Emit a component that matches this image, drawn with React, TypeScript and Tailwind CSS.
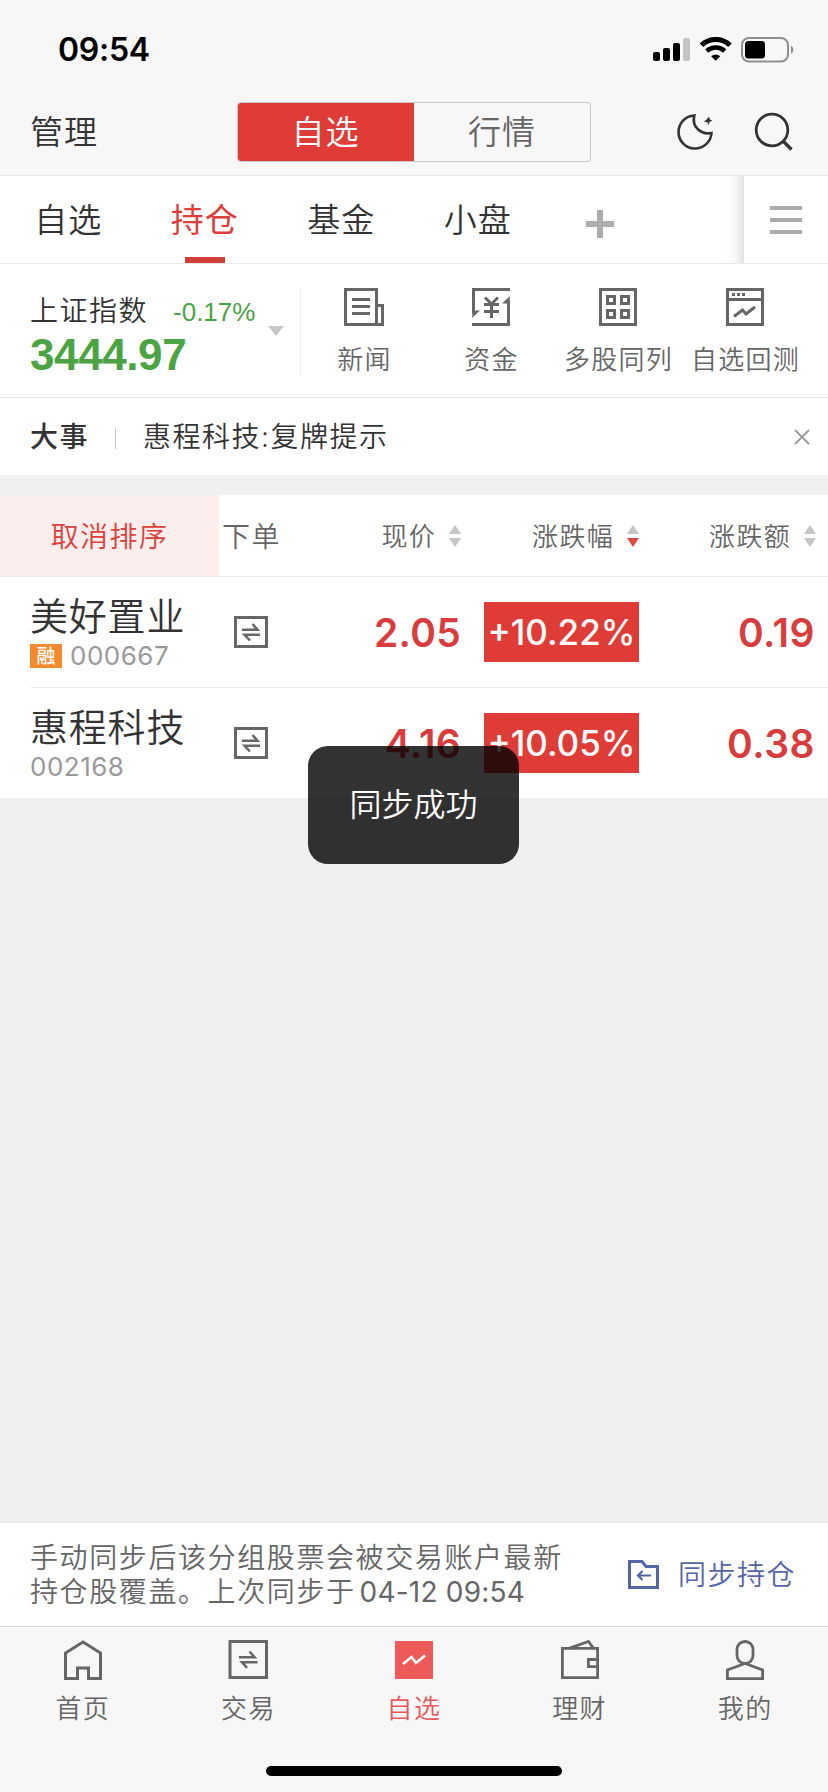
import type { ReactNode } from 'react';

function StatusBar() {
  return (
    <div className="flex h-[100px] items-center justify-between pl-[58px] pr-[33px]">
      <div className="text-[32px] font-semibold leading-none tracking-[-0.300px] text-black">09:54</div>
      <svg width="142" height="26" viewBox="0 0 142 26" fill="none">
        <g transform="translate(0 1)">
          <rect x="0" y="14" width="7" height="9" rx="2" fill="#000" />
          <rect x="10" y="10" width="7" height="13" rx="2" fill="#000" />
          <rect x="20" y="5" width="7" height="18" rx="2" fill="#000" />
          <rect x="30" y="0" width="7" height="23" rx="2" fill="#c4c4c4" />
        </g>
        <path d="M48.5 8.2a20.5 20.5 0 0 1 28.5 0" stroke="#000" strokeWidth="5" />
        <path d="M53.8 14.1a13 13 0 0 1 17.9 0" stroke="#000" strokeWidth="4.6" />
        <path d="M62.7 23.8l-4.6-4.6a6.8 6.8 0 0 1 9.2 0z" fill="#000" />
        <rect x="89" y="1" width="46" height="23.5" rx="7" stroke="#8f8f8f" strokeWidth="2" />
        <rect x="92" y="4" width="20" height="17.500" rx="3.500" fill="#000" />
        <path d="M138 8.800c3 1 3 7 0 8z" fill="#8f8f8f" />
      </svg>
    </div>
  );
}

function NavBar() {
  return (
    <div className="flex h-[76px] items-start border-b border-[#e6e6e6] text-[33px] leading-none tracking-[1px]">
      <div className="flex h-[64px] w-[237px] items-center pl-[30px] text-[#333]">管理</div>
      <div className="mt-[2px] flex h-[60px] w-[354px] overflow-hidden rounded-[4px] border border-[#c8c8c8]">
        <div className="-my-px -ml-px flex w-[177px] items-center justify-center bg-[#df3c37] text-white">自选</div>
        <div className="flex flex-1 items-center justify-center text-[#666]">行情</div>
      </div>
      <div className="flex h-[64px] flex-1 items-center pl-[84px]">
        <svg width="40" height="40" viewBox="0 0 40 40" fill="none" stroke="#333" strokeWidth="2.600">
          <path d="M19.300 3.500A16.500 16.500 0 1 0 36.500 21C26 23 16.500 15 19.300 3.500Z" strokeLinejoin="miter" />
          <path d="M34 4.500l.9 3 2.700 1.200-2.900 1.100-1.100 3.200-1.300-2.800-3.400-.6 2.700-2z" fill="#333" stroke="none" />
        </svg>
        <svg className="ml-[38px]" width="40" height="40" viewBox="0 0 40 40" fill="none" stroke="#333" strokeWidth="2.800">
          <circle cx="19" cy="18" r="15.800" />
          <path d="M30 29l8.500 8.500" strokeWidth="3.200" />
        </svg>
      </div>
    </div>
  );
}

function Tabs() {
  const tabs = ['自选', '持仓', '基金', '小盘'];
  return (
    <div className="flex h-[88px] border-b border-[#e8e8e8] bg-white text-[33px] leading-none tracking-[1px] text-[#333]">
      <div className="flex flex-1 overflow-hidden">
        {tabs.map((tab, i) => (
          <div key={tab} className="flex w-[136.500px] flex-col items-center">
            <div className={i === 1 ? 'flex h-[81px] items-center pt-[7px] font-normal text-[#dc3e3a]' : 'flex h-[81px] items-center pt-[7px]'}>
              {tab}
            </div>
            {i === 1 && <div className="h-[6px] w-[40px] bg-[#d13f39]" />}
          </div>
        ))}
        <div className="flex w-[108px] items-center justify-center pt-[9px]">
          <svg width="28" height="28" viewBox="0 0 28 28">
            <path d="M14 0v28M0 14h28" stroke="#ababab" strokeWidth="6" />
          </svg>
        </div>
        <div className="ml-auto w-[18px] bg-linear-to-r from-white via-[#f8f8f8] to-[#e2e2e2]" />
      </div>
      <div className="flex w-[84px] items-center pl-[26px]">
        <svg width="32" height="28" viewBox="0 0 32 28">
          <path d="M0 2h32M0 14h32M0 26h32" stroke="#aaa" strokeWidth="4" />
        </svg>
      </div>
    </div>
  );
}

const newsIcon = (
  <>
    <path d="M.5 1.500h31v35H.5z" />
    <path d="M32 17.500h5.500v19H31" />
    <path d="M7 11.500h18M7 18.500h18M7 25.500h18" />
  </>
);
const fundsIcon = (
  <>
    <path d="M38 1.500H1.500V26" />
    <path d="M0 36.500h36.500V12" />
    <path d="M0 30l8-7.500H1zM38 8l-8 7.500h7z" fill="#666" stroke="none" />
    <path d="M13 9.500l6.500 6.500L26 9.500M12 16.500h15M12 23.500h15M19.500 16v14" />
  </>
);
const gridIcon = (
  <>
    <path d="M1.500 1.500h35v35h-35z" />
    <path d="M8.500 8.500h7v7h-7zM22.500 8.500h7v7h-7zM8.500 22.500h7v7h-7zM22.500 22.500h7v7h-7z" />
  </>
);
const backtestIcon = (
  <>
    <path d="M1.500 1.500h35v35h-35zM1.500 11.500h35" />
    <path d="M6 6.500h13" strokeDasharray="3 2" />
    <path d="M8 28.500l8.500-6.500 3.500 4 9-7" />
  </>
);

function Shortcut({ label, children }: { label: string; children: ReactNode }) {
  return (
    <div className="flex w-[127px] flex-col items-center gap-[20px] pt-[24px]">
      <svg className="overflow-visible" width="38" height="38" viewBox="0 0 38 38" fill="none" stroke="#666" strokeWidth="3">
        {children}
      </svg>
      <div className="whitespace-nowrap pl-[2px] text-[26px] leading-[28px] tracking-[1.300px] text-[#666]">{label}</div>
    </div>
  );
}

function IndexBar() {
  return (
    <div className="flex h-[134px] border-b border-[#e6e6e6] bg-white">
      <div className="flex w-[268px] flex-col pl-[30px] pt-[32px]">
        <div className="flex items-center text-[28px] leading-none tracking-[1.500px] text-[#333]">
          上证指数
          <span className="ml-[25px] pt-[3px] font-['Liberation_Sans',sans-serif] text-[26px] leading-none tracking-normal text-[#4ca343]">-0.17%</span>
        </div>
        <div className="mt-[8px] font-['Liberation_Sans',sans-serif] text-[44px] font-bold leading-[44px] tracking-[-0.400px] text-[#4ca343]">3444.97</div>
      </div>
      <svg className="mt-[62px]" width="16" height="10" viewBox="0 0 16 10">
        <path d="M0 0h16L8 10z" fill="#c8c8c8" />
      </svg>
      <div className="mt-[24px] h-[88px] w-px translate-x-[16px] bg-[#ececec]" />
      <div className="ml-[15px] flex">
        <Shortcut label="新闻">{newsIcon}</Shortcut>
        <Shortcut label="资金">{fundsIcon}</Shortcut>
        <Shortcut label="多股同列">{gridIcon}</Shortcut>
        <Shortcut label="自选回测">{backtestIcon}</Shortcut>
      </div>
    </div>
  );
}

function NewsBar() {
  return (
    <div className="flex h-[77px] items-center bg-white pl-[30px] pr-[18px] text-[28px] leading-none tracking-[1.500px] text-[#333]">
      <div className="font-medium">大事</div>
      <div className="ml-[26px] mt-[4px] h-[21px] w-px bg-[#ccc]" />
      <div className="ml-[27px]">惠程科技:复牌提示</div>
      <svg className="ml-auto" width="16" height="16" viewBox="0 0 16 16">
        <path d="M1 1l14 14M15 1L1 15" stroke="#999" strokeWidth="1.800" />
      </svg>
    </div>
  );
}

function SortHead({ label, active }: { label: string; active?: boolean }) {
  return (
    <div className="flex items-center justify-end text-[26px] tracking-[1.300px]">
      <span className="pt-[2px]">{label}</span>
      <svg className="ml-[13px]" width="12" height="22" viewBox="0 0 12 22">
        <path d="M6 0l6 9H0z" fill="#c4c4c4" />
        <path d="M6 22l6-9H0z" fill={active ? '#e04a46' : '#c4c4c4'} />
      </svg>
    </div>
  );
}

function SwapGlyph({ size }: { size: 'row' | 'tab' }) {
  return size === 'row' ? (
    <svg width="34" height="32" viewBox="0 0 34 32" fill="none" stroke="#666" strokeWidth="3">
      <path d="M1.500 1.500h31v29h-31z" />
      <path d="M8 13.700h15.500L18.500 8M26 18.800H10.500l5.500 5.700" strokeWidth="2.500" />
    </svg>
  ) : (
    <svg width="40" height="40" viewBox="0 0 40 40" fill="none" stroke="#666" strokeWidth="3">
      <path d="M2 1.500h36.500v36H2z" />
      <path d="M11 17.200h15.500L21.500 11.500M29.500 22.200H14l5 5.700" strokeWidth="2.500" />
    </svg>
  );
}

interface Stock {
  name: string;
  code: string;
  margin: boolean;
  price: string;
  pct: string;
  change: string;
}

const stocks: Stock[] = [
  { name: '美好置业', code: '000667', margin: true, price: '2.05', pct: '+10.22%', change: '0.19' },
  { name: '惠程科技', code: '002168', margin: false, price: '4.16', pct: '+10.05%', change: '0.38' },
];

function StockRow({ stock }: { stock: Stock }) {
  return (
    <div className="grid h-[110px] grid-cols-[219px_90px_152px_178px_176px]">
      <div className="pl-[30px] pt-[20px]">
        <div className="text-[38px] leading-[38px] tracking-[0.800px] text-[#333]">{stock.name}</div>
        <div className="mt-[7px] flex h-[28px] items-center text-[26px] font-normal leading-none tracking-[0.500px] text-[#999]">
          {stock.margin && (
            <span className="mr-[8px] flex h-[24px] w-[32px] items-center justify-center bg-[#f58a2c] text-[19px] font-medium tracking-normal text-white">融</span>
          )}
          {stock.code}
        </div>
      </div>
      <div className="flex items-center pl-[15px]">
        <SwapGlyph size="row" />
      </div>
      <div className="flex items-center justify-end text-[39px] font-semibold tracking-[0.300px] text-[#d93c3c]">{stock.price}</div>
      <div className="flex items-center justify-end">
        <div className="flex h-[60px] w-[155px] items-center justify-center bg-[#df3c37] text-[35px] font-medium text-white">{stock.pct}</div>
      </div>
      <div className="flex items-center justify-end text-[39px] font-semibold tracking-[0.500px] text-[#d93c3c]">{stock.change}</div>
    </div>
  );
}

function StockTable() {
  return (
    <div className="bg-white leading-none">
      <div className="grid h-[82px] grid-cols-[219px_90px_152px_178px_177px] border-b border-[#e8e8e8] text-[28px] tracking-[1.400px] text-[#666]">
        <div className="flex items-center justify-center bg-[#fdeeee] pt-[3px] text-[#dc3e3a]">取消排序</div>
        <div className="flex items-center pl-[3px] pt-[3px]">下单</div>
        <SortHead label="现价" />
        <SortHead label="涨跌幅" active />
        <SortHead label="涨跌额" />
      </div>
      <StockRow stock={stocks[0]} />
      <div className="ml-[31px] h-px bg-[#e8e8e8]" />
      <StockRow stock={stocks[1]} />
    </div>
  );
}

function SyncBar() {
  return (
    <div className="flex h-[104px] items-center border-t border-[#e2e2e2] bg-white">
      <div className="w-[597px] whitespace-nowrap pl-[30px] text-[28px] leading-[34px] tracking-[1.600px] text-[#666]">
        <div>手动同步后该分组股票会被交易账户最新</div>
        <div className="flex">
          持仓股覆盖。上次同步于<span className="ml-[4px] font-normal tracking-[0.200px]">04-12 09:54</span>
        </div>
      </div>
      <svg className="ml-[31px]" width="31" height="29" viewBox="0 0 31 29" fill="none" stroke="#5466a8" strokeWidth="3">
        <path d="M1.500 1.500H14l4 5h11.500v21h-28z" />
        <path d="M23 15.500H10M14.500 11l-4.500 4.500 4.500 4.500" strokeWidth="2.200" />
      </svg>
      <div className="ml-[19px] pt-px text-[28px] leading-none tracking-[1.500px] text-[#5466a8]">同步持仓</div>
    </div>
  );
}

const homeIcon = (
  <svg width="40" height="40" viewBox="0 0 40 40" fill="none" stroke="#666" strokeWidth="3">
    <path d="M14.500 38.500H2.500V13L20 2l17.500 11v25.500h-12V28h-11z" />
  </svg>
);
const watchIcon = (
  <svg width="40" height="40" viewBox="0 0 40 40" fill="none">
    <path d="M1 1h38v38H1z" fill="#ed5a57" />
    <path d="M9 24l8.500-7 4.500 6 9-7.500" stroke="#fff" strokeWidth="2.600" />
  </svg>
);
const walletIcon = (
  <svg width="40" height="40" viewBox="0 0 40 40" fill="none" stroke="#666" strokeWidth="2.800">
    <path d="M2.400 8.400h35.200v29.200H2.400z" />
    <path d="M9 8.400L28.500 1.500l5 6.900M38 19.500h-9.600v7.100H38" />
  </svg>
);
const userIcon = (
  <svg width="40" height="40" viewBox="0 0 40 40" fill="none" stroke="#666" strokeWidth="2.800">
    <rect x="12" y="1.500" width="16" height="22" rx="8" />
    <path d="M20 23.500L2.400 30v8.600h35.200V30z" />
  </svg>
);

function TabBar() {
  const items: { label: string; icon: ReactNode; active?: boolean }[] = [
    { label: '首页', icon: homeIcon },
    { label: '交易', icon: <SwapGlyph size="tab" /> },
    { label: '自选', icon: watchIcon, active: true },
    { label: '理财', icon: walletIcon },
    { label: '我的', icon: userIcon },
  ];
  return (
    <div className="flex h-[166px] flex-col items-center border-t border-[#d8d8d8] bg-[#f7f7f7]">
      <div className="grid w-full grid-cols-5 pt-[13px]">
        {items.map((item) => (
          <div
            key={item.label}
            className={
              item.active
                ? 'flex flex-col items-center gap-[16px] text-[26px] leading-none tracking-[1.400px] text-[#e8575c]'
                : 'flex flex-col items-center gap-[16px] text-[26px] leading-none tracking-[1.400px] text-[#666]'
            }
          >
            {item.icon}
            <span>{item.label}</span>
          </div>
        ))}
      </div>
      <div className="mb-[16px] mt-auto h-[10px] w-[296px] rounded-full bg-black" />
    </div>
  );
}

export default function App() {
  return (
    <div className="relative flex h-[1792px] w-[828px] flex-col overflow-hidden bg-[#f0f0f0] font-['Inter','Noto_Sans_CJK_SC',sans-serif] font-[350]">
      <div className="bg-[#f7f7f7]">
        <StatusBar />
        <NavBar />
      </div>
      <Tabs />
      <IndexBar />
      <NewsBar />
      <div className="h-[20px]" />
      <StockTable />
      <div className="flex-1" />
      <SyncBar />
      <TabBar />
      <div className="absolute left-[308px] top-[746px] flex h-[118px] w-[211px] items-center justify-center rounded-[20px] bg-black/80 text-[32px] leading-none text-white">
        同步成功
      </div>
    </div>
  );
}
